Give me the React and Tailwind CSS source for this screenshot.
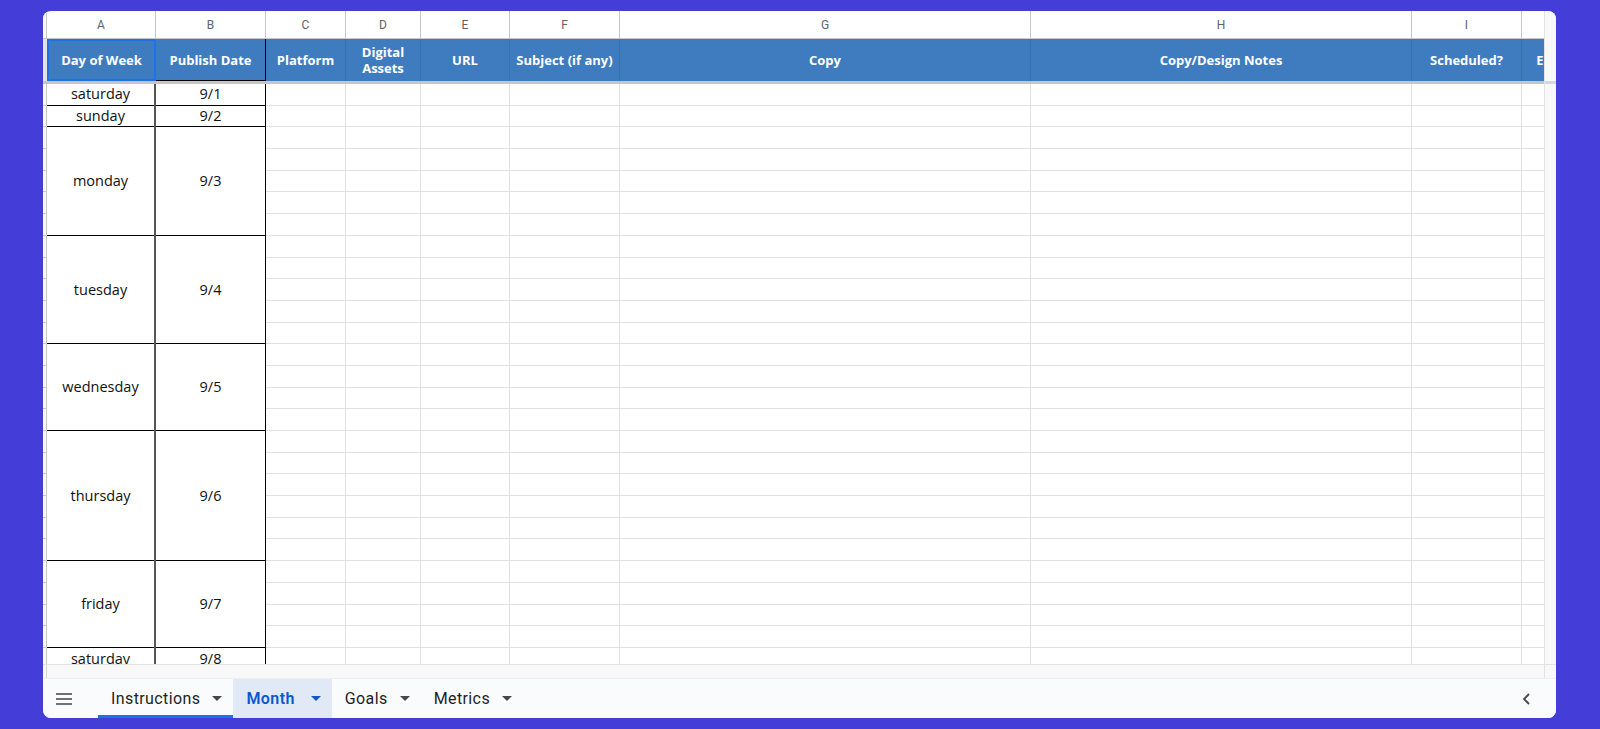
import React from 'react';

const cols = [
  { key: 'A', w: 'w-[109px]', title: 'Day of Week' },
  { key: 'B', w: 'w-[110px]', title: 'Publish Date' },
  { key: 'C', w: 'w-[80px]', title: 'Platform' },
  { key: 'D', w: 'w-[75px]', title: 'Digital Assets' },
  { key: 'E', w: 'w-[89px]', title: 'URL' },
  { key: 'F', w: 'w-[110px]', title: 'Subject (if any)' },
  { key: 'G', w: 'w-[411px]', title: 'Copy' },
  { key: 'H', w: 'w-[381px]', title: 'Copy/Design Notes' },
  { key: 'I', w: 'w-[110px]', title: 'Scheduled?' },
  { key: 'J', w: 'w-[110px]', title: 'Engagement' },
];

// merged day blocks in columns A and B
const days = [
  { day: 'saturday', date: '9/1', h: 'h-[21.7px]' },
  { day: 'sunday', date: '9/2', h: 'h-[21.7px]' },
  { day: 'monday', date: '9/3', h: 'h-[108.5px]' },
  { day: 'tuesday', date: '9/4', h: 'h-[108.5px]' },
  { day: 'wednesday', date: '9/5', h: 'h-[86.8px]' },
  { day: 'thursday', date: '9/6', h: 'h-[130.2px]' },
  { day: 'friday', date: '9/7', h: 'h-[86.8px]' },
  { day: 'saturday', date: '9/8', h: 'h-[21.7px]' },
];

const rows = Array.from({ length: 27 }, (_, i) => i);

const Caret = ({ className = 'text-[#444746]' }) => (
  <svg width="10" height="5" viewBox="0 0 10 5" className={className}>
    <path d="M0 0h10L5 5z" fill="currentColor" />
  </svg>
);

const Tab = ({ label, active, current }) => (
  <div
    className={`h-full flex items-center pl-[13px] pr-[11px] ${
      current ? 'bg-[#e1e9f7] gap-[16px]' : 'gap-[12px]'
    } ${active ? 'border-b-[3px] border-[#1a73e8] pt-[3px]' : ''}`}
  >
    <span
      className={`text-[16px] tracking-[0.4px] ${
        current ? 'text-[#0b57d0] font-semibold' : 'text-[#1f1f1f]'
      }`}
      style={{ fontFamily: 'Roboto, sans-serif' }}
    >
      {label}
    </span>
    <Caret className={current ? 'text-[#0b57d0]' : 'text-[#444746]'} />
  </div>
);

export default function App() {
  return (
    <div className="w-full h-[729px] bg-[#443dd8] pt-[11px] pb-[11px] pl-[43px] pr-[44px]">
      <div
        className="h-full bg-white rounded-lg overflow-hidden flex flex-col"
        style={{ fontFamily: '"Open Sans", sans-serif' }}
      >
        {/* grid + vertical scrollbar */}
        <div className="flex flex-1 overflow-hidden">
          <div className="flex-1 flex flex-col overflow-hidden">
            {/* column letters */}
            <div className="flex h-[28px] shrink-0">
              <div className="w-[4px] shrink-0 bg-[#f8f9fa] border-r border-b border-[#c7c7c7]" />
              {cols.map((c) => (
                <div
                  key={c.key}
                  className={`${c.w} shrink-0 flex items-center justify-center border-r border-b border-[#c7c7c7] text-[12px] text-[#5f6368]`}
                  style={{ fontFamily: 'Roboto, sans-serif' }}
                >
                  {c.key}
                </div>
              ))}
            </div>

            {/* header row */}
            <div className="flex h-[42px] shrink-0 bg-[#3e7bbf]">
              <div className="w-[4px] shrink-0 bg-[#e3e3e3]" />
              {cols.map((c) => (
                <div
                  key={c.key}
                  className={`${c.w} shrink-0 flex items-center justify-center text-center px-1 text-white font-bold text-[13px] leading-[16px] ${
                    c.key === 'A'
                      ? 'border-2 border-[#1a73e8]'
                      : c.key === 'B'
                      ? 'border-r border-b border-black'
                      : 'border-r border-[#3870ad]'
                  }`}
                >
                  {c.key === 'D' ? (
                    <span>
                      Digital
                      <br />
                      Assets
                    </span>
                  ) : (
                    <span className="whitespace-nowrap">{c.title}</span>
                  )}
                </div>
              ))}
            </div>

            {/* frozen row divider */}
            <div className="h-[3px] shrink-0 bg-[#c6c6c6]" />

            {/* body */}
            <div className="flex flex-1 overflow-hidden">
              <div className="w-[4px] shrink-0 bg-[#f8f9fa] border-r border-[#c7c7c7]">
                {rows.map((r) => (
                  <div key={r} className="h-[21.7px] border-b border-[#c7c7c7]" />
                ))}
              </div>
              <div className="w-[109px] shrink-0 border-r-2 border-[#555]">
                {days.map((d, i) => (
                  <div
                    key={i}
                    className={`${d.h} flex items-center justify-center border-b border-black text-[14.5px] text-[#111]`}
                  >
                    {d.day}
                  </div>
                ))}
              </div>
              <div className="w-[110px] shrink-0 border-r border-black">
                {days.map((d, i) => (
                  <div
                    key={i}
                    className={`${d.h} flex items-center justify-center border-b border-black text-[14.5px] text-[#111]`}
                  >
                    {d.date}
                  </div>
                ))}
              </div>
              {cols.slice(2).map((c) => (
                <div key={c.key} className={`${c.w} shrink-0 border-r border-[#e2e2e2]`}>
                  {rows.map((r) => (
                    <div key={r} className="h-[21.7px] border-b border-[#e2e2e2]" />
                  ))}
                </div>
              ))}
            </div>
          </div>

          {/* vertical scrollbar */}
          <div className="w-[12px] shrink-0 flex flex-col bg-[#f8f8f8] border-l border-[#e2e2e2]">
            <div className="h-[70px]" />
            <div className="h-[3px] bg-[#d3d8e0]" />
          </div>
        </div>

        {/* horizontal scrollbar */}
        <div className="h-[14px] shrink-0 flex bg-[#f8f8f8] border-t border-[#e2e2e2]">
          <div className="w-[4px] border-r border-[#d6d6d6]" />
          <div className="flex-1" />
          <div className="w-[12px] border-l border-[#e2e2e2]" />
        </div>

        {/* sheet tabs */}
        <div className="h-[40px] shrink-0 flex items-stretch bg-[#f9fbfd] border-t border-[#eceef1] pl-[13px]">
          <div className="flex items-center">
            <svg width="16" height="12" viewBox="0 0 16 12" className="text-[#444746]">
              <path d="M0 1h16M0 6h16M0 11h16" stroke="currentColor" strokeWidth="1.6" />
            </svg>
          </div>
          <div className="flex ml-[26px]">
            <Tab label="Instructions" active />
            <Tab label="Month" current />
            <Tab label="Goals" />
            <Tab label="Metrics" />
          </div>
          <div className="ml-auto mr-[26px] flex items-center">
            <svg width="8" height="12" viewBox="0 0 8 12" className="text-[#444746]">
              <path d="M7 1L2 6l5 5" stroke="currentColor" strokeWidth="1.8" fill="none" />
            </svg>
          </div>
        </div>
      </div>
    </div>
  );
}
